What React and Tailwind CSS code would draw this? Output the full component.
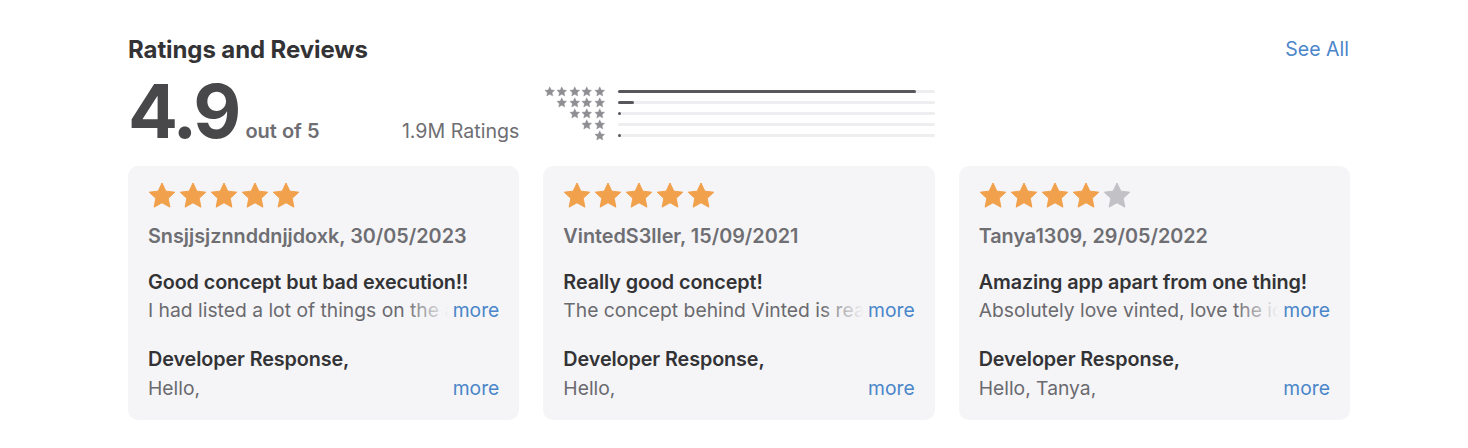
import React from "react";

const font = { fontFamily: "Inter, 'Noto Sans', sans-serif" };

function Star({ size, color }) {
  return (
    <svg width={size} height={size} viewBox="0 0 24 24" className="shrink-0">
      <path
        d="M12 1.6 L15.05 8.1 L22.2 8.95 L16.95 13.85 L18.3 20.9 L12 17.4 L5.7 20.9 L7.05 13.85 L1.8 8.95 L8.95 8.1 Z"
        fill={color}
        stroke={color}
        strokeWidth="0.8"
        strokeLinejoin="round"
      />
    </svg>
  );
}

const hist = [
  { n: 5, pct: 94 },
  { n: 4, pct: 5 },
  { n: 3, pct: 0.8 },
  { n: 2, pct: 0 },
  { n: 1, pct: 0.8 },
];

const reviews = [
  {
    stars: 5,
    name: "Snsjjsjznnddnjjdoxk, 30/05/2023",
    title: "Good concept but bad execution!!",
    body: "I had listed a lot of things on the app and",
    reply: "Hello,",
  },
  {
    stars: 5,
    name: "VintedS3ller, 15/09/2021",
    title: "Really good concept!",
    body: "The concept behind Vinted is really good and",
    reply: "Hello,",
  },
  {
    stars: 4,
    name: "Tanya1309, 29/05/2022",
    title: "Amazing app apart from one thing!",
    body: "Absolutely love vinted, love the idea of it",
    reply: "Hello, Tanya,",
  },
];

function Card({ r }) {
  return (
    <div className="bg-[#f5f5f7] rounded-[10px] h-[254px] pl-[20px] pr-[20px] pt-[15px]">
      <div className="flex gap-[1px] ml-[-1px]">
        {[0, 1, 2, 3, 4].map((i) => (
          <Star key={i} size={30} color={i < r.stars ? "#f1a04b" : "#c2c2c6"} />
        ))}
      </div>
      <div className="mt-[11px] text-[19.8px] leading-[28px] font-semibold text-[#6e6e73]">
        {r.name}
      </div>
      <div className="mt-[18px] text-[19.8px] leading-[28px] font-semibold text-[#333336] tracking-[-0.1px]">
        {r.title}
      </div>
      <div className="relative h-[28px] overflow-hidden">
        <div className="text-[19.3px] leading-[28px] text-[#6a6a6f] whitespace-nowrap">
          {r.body}
        </div>
        <div className="absolute right-0 top-0 h-[28px] flex">
          <div className="w-[44px] h-full bg-gradient-to-r from-[#f5f5f700] to-[#f5f5f7]"></div>
          <span className="bg-[#f5f5f7] pl-[4px] text-[19.3px] leading-[28px] text-[#4a86c9]">more</span>
        </div>
      </div>
      <div className="mt-[21px] text-[19.8px] leading-[28px] font-semibold text-[#333336] tracking-[-0.1px]">
        Developer Response,
      </div>
      <div className="flex justify-between text-[19.3px] leading-[30px]">
        <span className="text-[#6a6a6f]">{r.reply}</span>
        <span className="text-[#4a86c9]">more</span>
      </div>
    </div>
  );
}

export default function App() {
  return (
    <div className="w-[1468px] h-[448px] bg-white" style={font}>
      <div className="w-[1222px] ml-[128px] pt-[36px]">
        <div className="flex justify-between items-center h-[28px]">
          <h2 className="text-[24px] font-bold text-[#333336] tracking-[-0.1px]">
            Ratings and Reviews
          </h2>
          <a className="text-[19.5px] text-[#4a86c9] mr-[1px]">See All</a>
        </div>
        <div className="grid grid-cols-3 gap-[24px] mt-[12px] h-[86px]">
          <div className="flex justify-between items-baseline">
            <div className="flex items-baseline">
              <span className="text-[74px] leading-[70px] font-bold text-[#48484a] tracking-[-3px]">
                4.9
              </span>
              <span className="ml-[7px] text-[20px] font-semibold text-[#6e6e73]">
                out of 5
              </span>
            </div>
            <span className="text-[19.6px] text-[#6e6e73]">1.9M Ratings</span>
          </div>
          <div className="flex flex-col pt-[10px]">
            {hist.map((h) => (
              <div key={h.n} className="flex items-center h-[11px]">
                <div className="w-[62px] flex justify-end gap-[1px]">
                  {Array.from({ length: h.n }).map((_, i) => (
                    <Star key={i} size={11.5} color="#8e8e93" />
                  ))}
                </div>
                <div className="ml-[13px] flex-1 h-[3px] bg-[#eeeef0] rounded-full">
                  <div
                    className="h-full bg-[#57575c] rounded-full"
                    style={{ width: h.pct > 0 ? `max(${h.pct}%, 3px)` : 0 }}
                  ></div>
                </div>
              </div>
            ))}
          </div>
          <div></div>
        </div>
        <div className="grid grid-cols-3 gap-[24px] mt-[4px]">
          {reviews.map((r, i) => (
            <Card key={i} r={r} />
          ))}
        </div>
      </div>
    </div>
  );
}
